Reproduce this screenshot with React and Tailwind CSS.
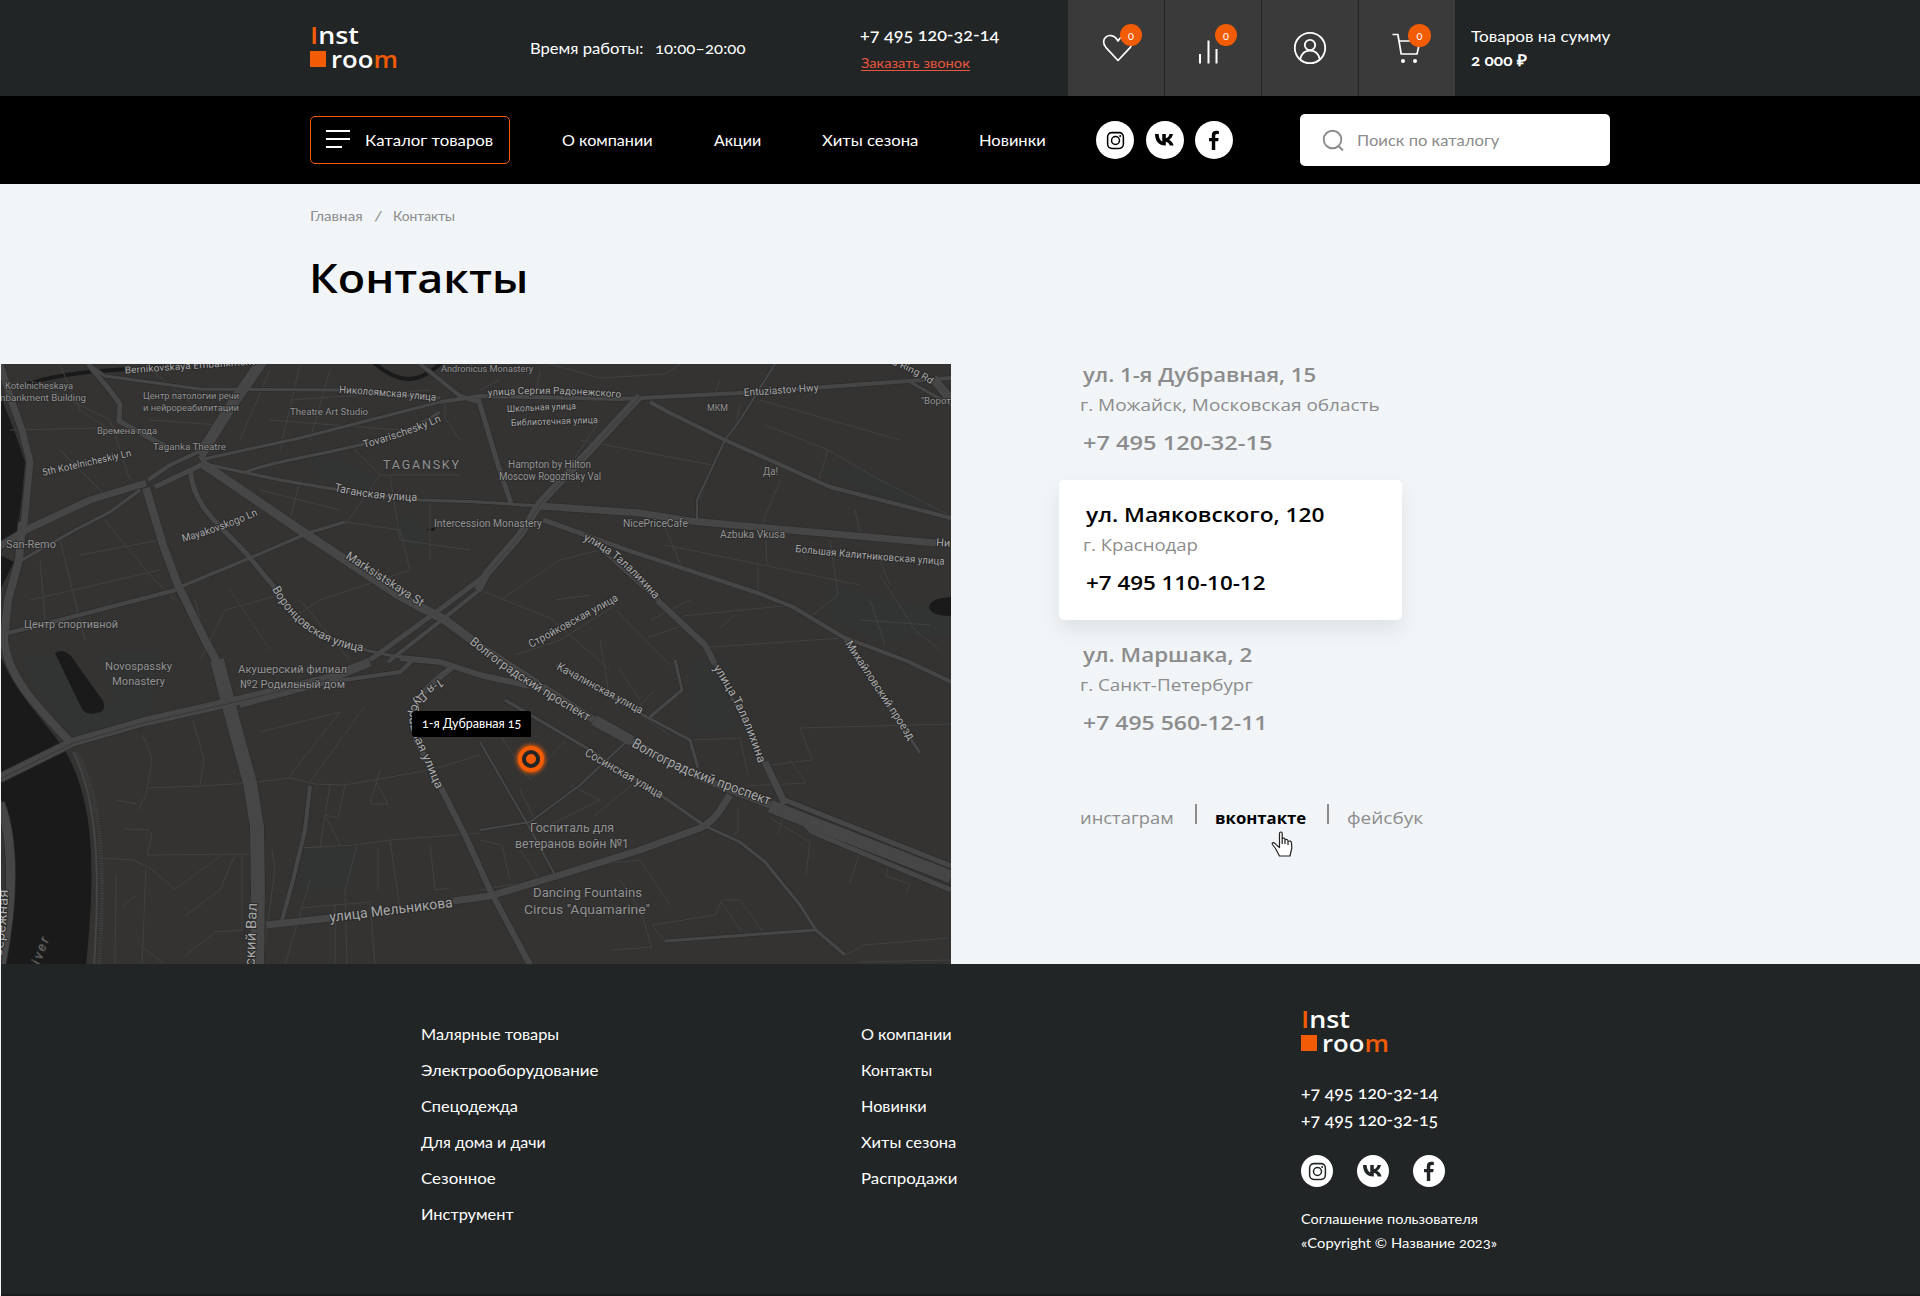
import React, { useLayoutEffect, useRef, useState } from "react";

/* A single line of text stretched to the width of its box. */
function Fit({ className = "", children }) {
  const outer = useRef(null);
  const inner = useRef(null);
  const [scale, setScale] = useState(1);
  useLayoutEffect(() => {
    const measure = () => {
      const w = inner.current.offsetWidth;
      if (w) setScale(outer.current.clientWidth / w);
    };
    measure();
    document.fonts?.ready.then(measure);
  }, []);
  return (
    <span ref={outer} className={`block whitespace-nowrap ${className}`}>
      <span ref={inner} className="inline-block origin-left" style={{ transform: `scaleX(${scale})` }}>
        {children}
      </span>
    </span>
  );
}

function Logo() {
  return (
    <div className="font-['Open_Sans',sans-serif] text-[23px] font-semibold leading-6 text-white">
      <Fit className="w-[49px]"><span className="text-[#f25c05]">I</span>nst</Fit>
      <div className="flex">
        <div className="mr-[5px] mt-[4px] size-4 bg-[#f25c05]" />
        <Fit className="w-[67px]">roo<span className="text-[#f25c05]">m</span></Fit>
      </div>
    </div>
  );
}

function InstagramGlyph() {
  return (
    <svg viewBox="0 0 20 20" className="size-[19px]" fill="none" stroke="currentColor" strokeWidth="1.6">
      <rect x="1.700" y="1.700" width="16.600" height="16.600" rx="4.500" />
      <circle cx="10" cy="10" r="4.200" />
      <circle cx="14.900" cy="5.200" r="1.100" fill="currentColor" stroke="none" />
    </svg>
  );
}

function VkGlyph() {
  return (
    <svg viewBox="0 0 22 14" className="h-[14px] w-[22px]" fill="currentColor">
      <path d="M1 1h3.600c.3 4 1.600 6.600 3.700 7.400V1h3.500v4.300c1.800-.3 3.200-2 3.800-4.300H19c-.5 2.500-1.900 4.600-4 5.800 2.300 1 3.800 3 4.600 5.700h-3.800c-.7-2.100-2-3.500-4-3.800v3.800h-.6C5 12.500 1.200 8.600 1 1z" />
    </svg>
  );
}

function FacebookGlyph() {
  return (
    <svg viewBox="0 0 12 22" className="h-[21px] w-[12px]" fill="currentColor">
      <path d="M3.700 21v-9.300H.8V8.300h2.900V5.500C3.700 2.500 5.500.9 8.200.9c1.300 0 2.600.2 2.900.3v3.100H9.300c-1.600 0-2 .8-2 1.900v2.100h3.600l-.5 3.400H7.300V21z" />
    </svg>
  );
}

function Socials({ circle, gap, tone }) {
  const base = `flex items-center justify-center rounded-full bg-white ${circle}`;
  return (
    <div className={`flex ${gap} ${tone}`}>
      <div className={base}><InstagramGlyph /></div>
      <div className={base}><VkGlyph /></div>
      <div className={base}><FacebookGlyph /></div>
    </div>
  );
}

function Badge({ className }) {
  return (
    <span className={`absolute flex items-center justify-center rounded-full bg-[#f25c05] text-[11px] leading-none text-white ${className}`}>0</span>
  );
}

const cell = "relative h-24 w-24 bg-[#3a3a3a] text-white";

function TopBar() {
  return (
    <header className="h-24 bg-[#212526] pl-[310px] text-white">
      <div className="flex h-24">
        <div className="w-[220px] pt-[23px]"><Logo /></div>
        <div className="flex w-[331px] items-center text-[16px]">
          <Fit className="mr-[11px] w-[114px]">Время работы:</Fit>
          <Fit className="w-[90px]">10:00–20:00</Fit>
        </div>
        <div className="w-[207px] pt-[22px]">
          <Fit className="-ml-px w-[139px] text-[18px] font-medium leading-6">+7 495 120-32-14</Fit>
          <Fit className="mt-[7px] h-[18px] w-[109px] border-b border-[#e8563d] text-[14px] leading-[20px] text-[#e8563d]">Заказать звонок</Fit>
        </div>
        <div className="flex gap-px">
          <div className={cell}>
            <svg viewBox="0 0 96 96" className="size-24" fill="none" stroke="currentColor" strokeWidth="1.700" strokeLinejoin="round">
              <path d="M50 60.500 37.800 47.300c-3-3.400-2.800-7.700 0-10.200 3.200-2.700 8-1.800 10.300 1.200L50 41l2-2.700c2.500-3 7-3.900 10.300-1.200 2.800 2.500 3 6.800 0 10.200z" />
            </svg>
            <Badge className="left-[52px] top-[24px] size-[22px]" />
          </div>
          <div className={cell}>
            <svg viewBox="0 0 96 96" className="size-24" fill="none" stroke="currentColor" strokeWidth="2">
              <path d="M35 54v9.500M43.500 40.500v23M51.500 49v14.500" />
            </svg>
            <Badge className="left-[50px] top-[24px] size-[22px]" />
          </div>
          <div className={cell}>
            <svg viewBox="0 0 96 96" className="size-24" fill="none" stroke="currentColor" strokeWidth="1.800">
              <circle cx="48" cy="48" r="15.200" />
              <circle cx="48" cy="45" r="5.200" />
              <path d="M38 59.500C39.500 53.500 43 50.700 48 50.700s8.500 2.800 10 8.800" />
            </svg>
          </div>
          <div className={cell}>
            <svg viewBox="0 0 96 96" className="size-24" fill="none" stroke="currentColor" strokeWidth="1.700" strokeLinejoin="round">
              <path d="M33.500 34.500h5.400l3.300 19.500H58l3-13H40" />
              <circle cx="44" cy="61" r="2" fill="currentColor" stroke="none" />
              <circle cx="56" cy="61" r="2" fill="currentColor" stroke="none" />
            </svg>
            <Badge className="left-[49px] top-[24px] size-[23px]" />
          </div>
        </div>
        <div className="pl-4 pt-[24px] text-[16px] leading-6">
          <Fit className="w-[139px]">Товаров на сумму</Fit>
          <Fit className="w-[55px] font-bold">2 000 ₽</Fit>
        </div>
      </div>
    </header>
  );
}

function NavBar() {
  return (
    <nav className="flex h-[88px] items-center bg-black pl-[310px] text-[16px] text-white">
      <div className="mr-[52px] flex h-12 w-[200px] items-center rounded-[5px] border border-[#f25c05] pl-[15px]">
        <div className="mb-[2px] mr-[15px] flex w-6 flex-col gap-[6px]">
          <div className="h-[2px] w-6 bg-white" />
          <div className="h-[2px] w-6 bg-white" />
          <div className="h-[2px] w-4 bg-white" />
        </div>
        <Fit className="w-[128px]">Каталог товаров</Fit>
      </div>
      <Fit className="mr-[61px] w-[91px]">О компании</Fit>
      <Fit className="mr-[61px] w-[47px]">Акции</Fit>
      <Fit className="mr-[61px] w-[96px]">Хиты сезона</Fit>
      <Fit className="mr-[50px] w-[67px]">Новинки</Fit>
      <Socials circle="size-[38px]" gap="gap-[11.500px]" tone="text-black" />
      <div className="ml-[67px] flex h-[52px] w-[310px] items-center rounded-[5px] bg-white pl-[22px] text-[#8c8c8c]">
        <svg viewBox="0 0 22 22" className="mr-[13px] size-[22px]" fill="none" stroke="currentColor" strokeWidth="1.900">
          <circle cx="10.500" cy="10.500" r="8.800" />
          <path d="m16.500 17 4.500 4.500" />
        </svg>
        <Fit className="w-[142px]">Поиск по каталогу</Fit>
      </div>
    </nav>
  );
}

/* Streets: [stroke width, path]. */
const ROADS = [
  [11, "M263 360 L233 403 L200 455"],
  [5, "M200 455 L205 463 L195 468 L155 487"],
  [4, "M198 452 L170 465 L148 480"],
  [9, "M203 464 L300 530 L400 596 L445 620 L480 646"],
  [7, "M480 646 L560 698 L594 720"],
  [11, "M594 720 L632 741"],
  [7, "M632 741 L700 778 L770 805"],
  [13, "M770 806 L810 822 L951 877"],
  [5, "M785 800 L820 814 L951 866"],
  [5, "M803 822 L812 832 L951 890"],
  [8, "M146 488 L163 545 L178 585 L205 640 L217 662"],
  [14, "M217 660 L230 710 L250 783 L257 827 L258 890 L257 965"],
  [7, "M0 546 L30 528 L90 500 L146 483"],
  [3, "M22 560 L75 530 L110 512 L140 490"],
  [5, "M190 468 C193 510 222 525 250 558 L275 588"],
  [3, "M275 588 C300 630 340 650 420 660"],
  [3, "M180 587 L250 558 L308 533 L345 522"],
  [4, "M8 633 L60 620 L176 590"],
  [3, "M205 464 L280 480 L345 491 L420 500 L480 502"],
  [7, "M540 506 L640 513 L690 521 L800 531 L936 543"],
  [3, "M478 502 L540 506"],
  [3, "M204 459 L300 438 L440 402"],
  [3, "M245 472 C300 452 380 452 440 412"],
  [3, "M88 364 L105 376 L200 389 L340 390 L440 398"],
  [5, "M88 364 L108 388 L120 404 L119 421 L150 438 L168 448"],
  [4, "M440 402 L480 396 L620 399 L740 393 L951 378"],
  [5, "M478 398 L498 465 L511 503"],
  [4, "M420 364 L460 396 L478 402"],
  [8, "M640 396 L590 450 L540 503 L520 535 L487 573 L478 590"],
  [5, "M482 578 L443 607 L370 660"],
  [4, "M482 588 L443 619 L388 662"],
  [4, "M650 402 L668 412 L725 440 L830 487 L951 518"],
  [2, "M775 364 L740 420 L725 440 L697 500 L697 520"],
  [5, "M543 520 L585 535"],
  [4, "M545 520 L627 550 L758 593 L793 607 L843 637 L907 661 L951 682"],
  [3, "M585 535 L657 600"],
  [6, "M657 600 L705 645 L715 664"],
  [3, "M715 664 L765 764"],
  [7, "M765 762 L785 804"],
  [3, "M843 637 L920 753"],
  [8, "M26 525 L22 525 L19 560 L8 600 L4 640 C8 675 30 700 72 744"],
  [7, "M0 364 L12 402 L22 430 L30 462 L24 525"],
  [9, "M0 778 L73 742 L143 722 L240 700 L330 678 L370 662"],
  [4, "M240 706 L330 682 L400 672 L413 660"],
  [6, "M400 658 L440 662 L480 675 L530 686"],
  [6, "M455 665 C430 685 404 700 416 740 L440 786 L465 835 L490 890 L530 965"],
  [7, "M266 925 L330 918"],
  [7, "M453 901 L490 896 L560 875 L640 850 L700 828 C716 820 720 810 730 795"],
  [3, "M705 826 L740 842 L765 862 L800 905 L816 930 L845 955"],
  [3, "M665 941 L816 930"],
  [3, "M505 700 L590 750 L665 798 L705 826"],
  [3, "M556 665 L643 715 L690 740 L698 768"],
  [2, "M626 742 L580 785 L530 822 L480 830"],
  [2, "M480 742 L528 825 L555 875"],
  [4, "M310 786 L305 830 L293 880 L282 920"],
  [3, "M675 660 L682 690 L650 717"],
  [3, "M910 382 L951 405"],
  [9, "M933 378 L951 400"],
  [9, "M0 803 C14 840 14 900 1 965"],
];

const MINOR = [
  "M193 720 L204 760 L200 786 L250 783 L290 778 L315 784 L345 785 L430 770 L480 755",
  "M143 735 L152 760 L146 795 L138 810 M147 788 L200 786 M116 800 L137 804 M125 829 L148 830 L152 835 L147 855 L250 854",
  "M340 712 L288 778 M340 712 L260 732 M365 706 L310 782 M330 785 L320 847 L300 848 M345 785 L338 818 L325 815 L340 845",
  "M295 848 L355 845 L390 840 L480 833 M378 847 L378 890 M380 770 L370 804 L388 804 L375 780 M357 846 L345 890 L347 965 M390 840 L400 910 M430 845 L435 890 L450 888",
  "M147 866 L175 889 L222 855 M185 916 L220 890 L235 855 M242 855 L242 930 L215 932 L185 956 M140 945 L165 965 M272 850 L275 870 L262 965",
  "M100 858 L133 860 L146 866 L142 965 M116 875 L115 965 M122 906 L135 896 M300 908 L370 902 M310 880 L285 965 M335 905 L335 965 M370 900 L375 965",
  "M105 520 L125 545 L150 575 L175 600 M60 540 L75 600 L85 640 M40 560 L45 620 M80 555 L160 540 M30 600 L160 570",
  "M200 660 L225 610 L280 595 M195 600 L205 640 M230 590 L270 650 M290 620 L320 600 L410 570 L400 530 L345 522 M350 660 L300 600",
  "M30 380 L110 420 L130 480 M60 365 L80 410 L110 430 M145 365 L200 410 M150 420 L220 425 M10 430 L100 428 M60 450 L110 500",
  "M270 370 L240 440 M300 365 L280 450 M330 370 L310 440 M270 420 L400 430 M290 400 L430 390 M350 445 L380 475 L460 475 M445 400 L445 418 L460 440",
  "M380 475 L345 525 M390 475 L400 540 L470 550 M430 500 L430 560 M300 480 L290 520 M260 490 L340 510",
  "M550 364 L600 378 L665 374 L680 364 M500 380 L480 390 M540 370 L535 400 M580 440 L712 465 L700 500 M600 420 L560 480",
  "M765 425 L828 450 L880 480 L951 516 M828 450 L818 482 M740 405 L735 430 M720 380 L715 395 M760 400 L900 440 M780 480 L760 530 M855 510 L862 540",
  "M664 525 L682 568 M665 545 L860 585 M766 540 L767 565 M758 563 L758 593 M830 540 L838 595 L810 617 M880 575 L915 630 L940 650 M880 560 L890 585",
  "M480 590 L550 618 L610 670 M500 600 L560 560 L600 550 M616 610 L670 665 M648 637 L682 626 M682 616 L793 605 M710 647 L843 638 M515 655 L560 640 L616 605",
  "M735 615 L720 628 M650 620 L690 600 M555 600 L590 595 M870 600 L885 645 M860 620 L930 625",
  "M800 728 L951 724 M800 728 L812 760 L770 765 M790 760 L806 783 L745 786 M520 850 L540 880 L480 890 M600 864 L640 860 L670 905",
  "M652 925 L715 915 L722 900 L740 900 L763 932 M652 925 L665 941 M720 900 L742 932 M845 955 L865 945 L948 938 M860 962 L951 960 M612 950 L652 947 L640 910 L620 880",
  "M770 818 L810 842 L806 875 M859 855 L850 883 M888 868 L886 876 L910 884 L906 893 M738 808 L738 830 L732 838 M784 812 L778 834",
  "M480 840 L502 845 L510 880 M520 790 L540 830 L600 800 L570 785 M594 816 L640 778 M500 735 L530 780 L565 740",
  "M620 670 L640 700 M640 715 L670 735 M655 690 L640 705 M600 640 L610 700 M693 740 L740 738 L748 775",
];

const PARKS = [
  "M22 655 L55 655 L85 715 L116 702 L98 655 L160 650 L150 715 L72 738 C50 705 30 690 22 655Z",
  "M310 455 L345 462 L378 478 L368 490 L318 478Z",
  "M818 470 L862 468 L940 510 L900 505Z",
  "M830 585 L910 605 L951 605 L951 635 L880 640 L830 620Z",
  "M690 660 L730 660 L735 730 L690 735Z",
  "M300 850 L360 846 L350 885 L298 892Z",
  "M398 520 C410 512 425 520 424 545 C412 552 400 545 398 520Z",
  "M152 478 L190 455 L194 460 L158 480Z",
];

/* Straight labels: [text, left, baseline, width, size]. */
const PLACES = [
  ["Kotelnicheskaya", 5, 388.5, 68, 9.5],
  ["mbankment Building", -3, 400.5, 89, 9.5],
  ["Центр патологии речи", 143, 398.5, 96, 9.5],
  ["и нейрореабилитации", 143, 410.5, 96, 9.5],
  ["Theatre Art Studio", 290, 414.5, 78, 9.5],
  ["Времена года", 97, 434, 60, 9.5],
  ["Taganka Theatre", 153, 450, 73, 9.5],
  ["San-Remo", 6, 548, 50, 10.5],
  ["Центр спортивной", 24, 628, 94, 11],
  ["Andronicus Monastery", 441, 372, 92, 9.5],
  ["МКМ", 707, 411, 21, 9.5],
  ["\"Ворот", 921, 404, 30, 9.5],
  ["Hampton by Hilton", 508, 467.5, 83, 10],
  ["Moscow Rogozhsky Val", 499, 480, 102, 10],
  ["Да!", 763, 475, 15, 10],
  ["NicePriceCafe", 623, 527, 65, 10.5],
  ["Azbuka Vkusa", 720, 538, 65, 10.5],
  ["Intercession Monastery", 434, 527, 108, 10.5],
  ["Novospassky", 105, 670, 67, 11.5],
  ["Monastery", 112, 684.5, 53, 11.5],
  ["Акушерский филиал", 238, 673, 109, 11.5],
  ["№2 Родильный дом", 240, 688, 105, 11.5],
  ["Госпиталь для", 530, 832, 84, 13],
  ["ветеранов войн №1", 515, 848, 114, 13],
  ["Dancing Fountains", 533, 897, 109, 13.5],
  ["Circus \"Aquamarine\"", 524, 914, 126, 13.5],
];

/* Labels that follow a street: [text, path, width, size]. */
const STREETS = [
  ["Bernikovskaya Embankment", "M125 373.500 Q190 369 256 364.500", 130, 9.5],
  ["Николоямская улица", "M339 393 Q390 396 437 401", 97, 10.5],
  ["Tovarischesky Ln", "M364 448 Q405 437 442 421", 82, 10.5],
  ["5th Kotelnicheskiy Ln", "M43 476 L132 456", 91, 10],
  ["Mayakovskogo Ln", "M183 542 Q220 532 258 515", 80, 10.5],
  ["Таганская улица", "M334 491 Q370 500 418 501", 84, 11.5],
  ["Marksistskaya St", "M345 558 L421 607", 90, 12],
  ["Воронцовская улица", "M272 589 C287 617 315 646 366 652", 115, 12],
  ["улица Сергия Радонежского", "M488 396 Q555 391 622 398", 133, 10],
  ["Школьная улица", "M507 412 L577 409", 69, 9.5],
  ["Библиотечная улица", "M511 426 L598 423", 87, 9.5],
  ["Entuziastov Hwy", "M744 396 L819 391", 75, 10.5],
  ["ord Ring Rd", "M882 361 Q910 370 930 384", 54, 9.5],
  ["Ни", "M936 546 L952 547", 14, 11],
  ["Большая Калитниковская улица", "M795 552 Q870 560 945 565", 150, 10.5],
  ["улица Талалихина", "M583 540 C610 552 635 576 655 600", 94, 11.5],
  ["Стройковская улица", "M531 648 L619 600", 100, 11],
  ["Волгоградский проспект", "M469 643 C510 677 550 699 588 722", 142, 12.5],
  ["Качалинская улица", "M556 669 L642 715", 96, 11.5],
  ["улица Талалихина", "M713 668 Q742 710 758 763", 106, 12],
  ["Михайловский проезд", "M845 644 L909 741", 116, 11.5],
  ["Волгоградский проспект", "M631 746 C680 776 725 788 770 806", 150, 14],
  ["Сосинская улица", "M584 755 L661 799", 88, 12],
  ["1-я Дубравная улица", "M441 678 C396 705 408 725 423 758 L437 791", 130, 12],
  ["улица Мельникова", "M330 922 L453 907", 124, 14.5],
  ["Новоспасский Вал", "M252 1035 L257 903", 132, 14.5],
  ["Набережная", "M-2 975 Q7 935 8 890", 86, 14],
];

function CityMap() {
  return (
    <svg viewBox="1 364 950 600" className="ml-px block h-[600px] w-[950px] overflow-hidden bg-[#343332]" fill="none">
      {PARKS.map((d) => <path key={d} d={d} fill="#313432" />)}
      <g fill="#1a1a1a">
        <path d="M0 395 L14 430 L25 462 L22 495 L17 535 L0 545Z M0 555 L14 562 L0 590Z" />
        <path d="M0 655 C16 695 45 720 66 752 C92 800 97 860 86 965 L2 965 C16 905 16 850 0 795Z" />
        <path d="M55 653 Q62 648 71 656 L103 701 Q107 712 96 713 Q86 715 82 709Z" />
        <path d="M951 597 Q930 598 929 607 Q931 616 951 616Z M426 530 L436 527 L434 531Z" />
      </g>
      <path d="M22 386 Q60 372 130 369 M372 361 Q390 378 408 379 Q425 379 442 362" stroke="#1a1a1a" strokeWidth="4" />
      <path d="M73 752 C93 790 102 850 94 965" stroke="#454545" strokeWidth="2" />
      <path d="M76 752 C98 790 107 850 99 965" stroke="#424242" strokeWidth="4" strokeDasharray="1 1.500" />
      <g stroke="#414141" strokeWidth="1">{MINOR.map((d) => <path key={d} d={d} />)}</g>
      <g stroke="#2e2d2d">{ROADS.map(([w, d]) => <path key={d} d={d} strokeWidth={w + 1.5} />)}</g>
      <g stroke="#464646" strokeLinejoin="round">{ROADS.map(([w, d]) => <path key={d} d={d} strokeWidth={w} />)}</g>
      <path d="M0 779 L73 743 L143 723 L240 701 L330 679" stroke="#373737" strokeWidth="1" />
      <path d="M641 396 L591 450 L541 503 L521 535 L488 573" stroke="#3b3b3b" strokeWidth="1" />
      <g fill="#939393" stroke="#2a2a2a" strokeWidth="1.500" className="font-['Roboto',sans-serif] lining-nums [paint-order:stroke]">
        {PLACES.map(([t, x, y, w, s]) => (
          <text key={t} x={x} y={y} textLength={w} lengthAdjust="spacingAndGlyphs" fontSize={s}>{t}</text>
        ))}
        <text x="383" y="469" textLength="76" fontSize="12.500">TAGANSKY</text>
        <text x="36" y="975" textLength="38" fontSize="13" fontStyle="italic" fill="#6a6a6a" transform="rotate(-70 36 975)">River</text>
      </g>
      <g className="font-['Roboto',sans-serif] lining-nums [paint-order:stroke]">
        {STREETS.map(([t, d, w, s], i) => (
          <g key={d}>
            <path id={`street-${i}`} d={d} />
            <text fontSize={s} fill="#a8a8a8" stroke="#2a2a2a" strokeWidth="2">
              <textPath href={`#street-${i}`} textLength={w} lengthAdjust="spacingAndGlyphs">{t}</textPath>
            </text>
          </g>
        ))}
      </g>
    </svg>
  );
}

function MapPanel() {
  return (
    <div className="relative w-[951px]">
      <CityMap />
      <div className="absolute left-[412px] top-[347px] flex h-[26px] w-[119px] items-center rounded-t-[3px] rounded-bl-[3px] bg-black pl-[10px] text-[12.500px] text-white">
        <Fit className="w-[99px]">1-я Дубравная 15</Fit>
      </div>
      <div className="absolute left-[518px] top-[382px] flex size-[26px] items-center justify-center rounded-full bg-[#f25c05] shadow-[0_0_4px_1px_#f25c05]">
        <div className="size-[18px] rounded-full border-4 border-[#212526] bg-[#f25c05]" />
      </div>
    </div>
  );
}

function Address({ street, city, phone, sw, cw, pw, strong = "" }) {
  return (
    <div className="text-[#8c8c8c]">
      <Fit className={`ml-[3px] text-[20px] font-semibold leading-7 ${sw} ${strong}`}>{street}</Fit>
      <Fit className={`mt-[4px] text-[16px] leading-6 ${cw}`}>{city}</Fit>
      <Fit className={`ml-[3px] mt-[12px] text-[20px] font-semibold leading-7 ${pw} ${strong}`}>{phone}</Fit>
    </div>
  );
}

function Contacts() {
  return (
    <div className="pl-[108px] font-['Open_Sans',sans-serif] font-medium lining-nums">
      <div className="-mt-[3px] ml-[21px] h-[115px]">
        <Address street="ул. 1-я Дубравная, 15" city="г. Можайск, Московская область" phone="+7 495 120-32-15" sw="w-[233px]" cw="w-[300px]" pw="w-[190px]" />
      </div>
      <div className="mt-1 h-[140px] w-[343px] rounded-[5px] bg-white pl-6 pt-[21px] shadow-[0_10px_20px_rgba(0,0,0,0.08)]">
        <Address street="ул. Маяковского, 120" city="г. Краснодар" phone="+7 495 110-10-12" sw="w-[238px]" cw="w-[115px]" pw="w-[180px]" strong="text-black" />
      </div>
      <div className="ml-[21px] mt-[21px]">
        <Address street="ул. Маршака, 2" city="г. Санкт-Петербург" phone="+7 495 560-12-11" sw="w-[169px]" cw="w-[172px]" pw="w-[185px]" />
      </div>
      <div className="relative ml-[21px] mt-[65px] flex text-[16px] leading-6 text-[#8c8c8c]">
        <Fit className="mt-[4px] w-[94px]">инстаграм</Fit>
        <div className="ml-[21px] mr-[18px] mt-[2px] h-5 w-[2px] bg-[#8c8c8c]" />
        <Fit className="mt-[4px] w-[91px] font-bold text-black">вконтакте</Fit>
        <div className="ml-[21px] mr-[18px] mt-[2px] h-5 w-[2px] bg-[#8c8c8c]" />
        <Fit className="mt-[4px] w-[76px]">фейсбук</Fit>
        <svg viewBox="0 0 22 26" className="absolute left-[191px] top-[29px] h-[26px] w-[22px]" fill="white" stroke="#222" strokeWidth="1.200" strokeLinejoin="round">
          <path d="M8.500 15.500V2.500Q8.500 1 9.800 1 11.200 1 11.200 2.500V8.500 7.500Q13.800 6.300 14 8.500V9Q16.500 7.500 17 10v.5Q20 9 20.500 12l.3 5-1.800 8H8.500L4.500 17.500 1.500 13.500Q.5 11.500 2.500 11.700 4 12 6 14.500l2.500 2zM11.200 8v5M14 8.500V13M17 10v4" />
        </svg>
      </div>
    </div>
  );
}

function Footer() {
  return (
    <footer className="ml-px flex h-[332px] border-b-2 border-[#191c1d] bg-[#212526] pl-[420px] text-white">
      <div className="flex w-[440px] flex-col gap-3 pt-[58px] text-[16px] leading-6">
        <Fit className="w-[138px]">Малярные товары</Fit>
        <Fit className="w-[177px]">Электрооборудование</Fit>
        <Fit className="w-[97px]">Спецодежда</Fit>
        <Fit className="w-[125px]">Для дома и дачи</Fit>
        <Fit className="w-[75px]">Сезонное</Fit>
        <Fit className="w-[93px]">Инструмент</Fit>
      </div>
      <div className="flex w-[440px] flex-col gap-3 pt-[58px] text-[16px] leading-6">
        <Fit className="w-[91px]">О компании</Fit>
        <Fit className="w-[71px]">Контакты</Fit>
        <Fit className="w-[66px]">Новинки</Fit>
        <Fit className="w-[95px]">Хиты сезона</Fit>
        <Fit className="w-[96px]">Распродажи</Fit>
      </div>
      <div className="pt-[43px]">
        <Logo />
        <div className="mt-[24px] text-[18px] font-medium leading-[27px]">
          <Fit className="w-[137px]">+7 495 120-32-14</Fit>
          <Fit className="w-[137px]">+7 495 120-32-15</Fit>
        </div>
        <div className="mb-5 mt-[22px]">
          <Socials circle="size-8" gap="gap-6" tone="text-[#212526]" />
        </div>
        <div className="text-[14px] leading-6">
          <Fit className="w-[177px]">Соглашение пользователя</Fit>
          <Fit className="w-[196px]">«Copyright © Название 2023»</Fit>
        </div>
      </div>
    </footer>
  );
}

export default function App() {
  return (
    <div className="h-[1296px] w-[1920px] overflow-hidden bg-[#f1f5f8] font-['Lato',sans-serif] oldstyle-nums">
      <TopBar />
      <NavBar />
      <main>
        <div className="h-[180px] pl-[310px] pt-[22px]">
          <div className="flex text-[14px] leading-5 text-[#8c8c8c]">
            <Fit className="w-[53px]">Главная</Fit>
            <Fit className="mx-[11px] w-[8px]">/</Fit>
            <Fit className="w-[62px]">Контакты</Fit>
          </div>
          <h1 className="mt-[25px] font-['Open_Sans',sans-serif] text-[40px] font-semibold leading-[54px] text-black">
            <Fit className="-ml-px w-[219px]">Контакты</Fit>
          </h1>
        </div>
        <div className="flex h-[600px]">
          <MapPanel />
          <Contacts />
        </div>
      </main>
      <Footer />
    </div>
  );
}
